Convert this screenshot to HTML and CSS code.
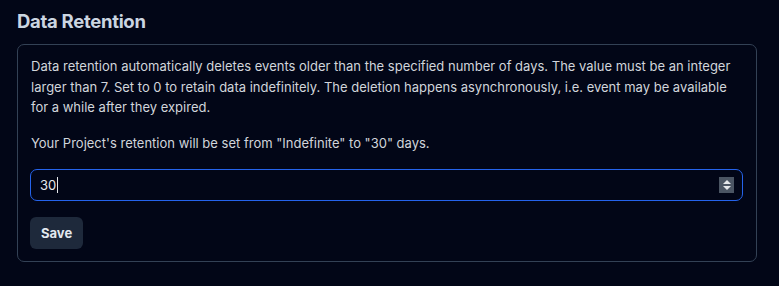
FILE: index.html
```html
<!DOCTYPE html>
<html lang="en">
<head>
<meta charset="utf-8">
<title>Data Retention</title>
<link rel="stylesheet" href="styles.css">
</head>
<body>
<section class="section">
  <h2 class="title">Data Retention</h2>
  <div class="card">
    <p class="desc">Data retention automatically deletes events older than the specified number of days. The value must be an integer larger than 7. Set to 0 to retain data indefinitely. The deletion happens asynchronously, i.e. event may be available for a while after they expired.</p>
    <p class="desc">Your Project's retention will be set from "Indefinite" to "30" days.</p>
    <div class="field">
      <span class="value">30</span><span class="caret"></span>
      <span class="spinner">
        <svg width="12" height="14" viewBox="0 0 12 14"><path d="M6 2 L10 6 H2 Z" fill="#e5e7eb"/><path d="M6 12 L10 8 H2 Z" fill="#e5e7eb"/></svg>
      </span>
    </div>
    <button class="btn">Save</button>
  </div>
</section>
</body>
</html>
```
FILE: styles.css
```css
html, body {
  margin: 0;
  padding: 0;
  background: #020617;
}
body {
  font-family: Inter, "Noto Sans", sans-serif;
  color: #cbd5e1;
}
.section {
  padding: 9px 22px 0 17px;
}
.title {
  margin: 0 0 11px 0;
  font-size: 18.5px;
  font-weight: 700;
  line-height: 24px;
  color: #cbd5e1;
  letter-spacing: -0.3px;
}
.card {
  border: 1px solid #334155;
  border-radius: 7px;
  padding: 11px 13px 12px 12px;
}
.desc {
  margin: 0 0 15px 1px;
  font-size: 13px;
  line-height: 20.5px;
  color: #d1d5db;
}
.field {
  position: relative;
  display: flex;
  align-items: center;
  height: 30px;
  border: 1.5px solid #2563eb;
  border-radius: 7px;
  padding: 0 9px;
  margin-top: 16px;
  font-size: 13px;
  color: #e5e7eb;
}
.caret {
  display: inline-block;
  width: 1px;
  height: 16px;
  background: #e5e7eb;
  margin-left: 1px;
}
.spinner {
  position: absolute;
  right: 8px;
  top: 7px;
  width: 15px;
  height: 16px;
  background: #4b5563;
  display: flex;
  align-items: center;
  justify-content: center;
}
.btn {
  display: block;
  margin-top: 16px;
  height: 32px;
  padding: 0 11px;
  border: none;
  border-radius: 6px;
  background: #1e293b;
  color: #e2e8f0;
  font-family: inherit;
  font-size: 13px;
  font-weight: 700;
}
```
